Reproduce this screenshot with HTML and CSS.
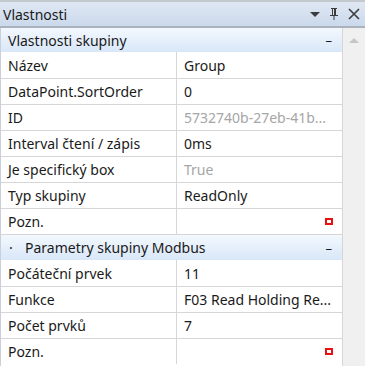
FILE: index.html
```html
<!DOCTYPE html>
<html lang="cs">
<head>
  <meta charset="UTF-8">
  <title>Vlastnosti</title>
  <link rel="stylesheet" href="styles.css">
</head>
<body>
  <div class="panel">
    <div class="titlebar">
      <span class="title">Vlastnosti</span>
      <div class="tools">
        <svg width="12" height="12" viewBox="0 0 12 12"><path d="M1 4h10l-5 5z" fill="#3c3c3c"/></svg>
        <svg width="12" height="14" viewBox="0 0 12 14"><path d="M3 1h6v1H8v6h2v1H6.5v4h-1V9H2V8h2V2H3zM5 2v6h1V2z" fill="#3c3c3c"/></svg>
        <svg width="14" height="14" viewBox="0 0 14 14"><path d="M2 2l10 10M12 2L2 12" stroke="#3c3c3c" stroke-width="1.6"/></svg>
      </div>
    </div>
    <div class="content">
      <div class="grid">
        <div class="category">
          <span>Vlastnosti skupiny</span>
          <span class="toggle">–</span>
        </div>
        <div class="row"><div class="name">Název</div><div class="value">Group</div></div>
        <div class="row"><div class="name">DataPoint.SortOrder</div><div class="value">0</div></div>
        <div class="row"><div class="name">ID</div><div class="value disabled">5732740b-27eb-41b...</div></div>
        <div class="row"><div class="name">Interval čtení / zápis</div><div class="value">0ms</div></div>
        <div class="row"><div class="name">Je specifický box</div><div class="value disabled">True</div></div>
        <div class="row"><div class="name">Typ skupiny</div><div class="value">ReadOnly</div></div>
        <div class="row"><div class="name">Pozn.</div><div class="value"><span class="note"></span></div></div>

        <div class="category">
          <span><span class="dot">·</span>Parametry skupiny Modbus</span>
          <span class="toggle">–</span>
        </div>
        <div class="row"><div class="name">Počáteční prvek</div><div class="value">11</div></div>
        <div class="row"><div class="name">Funkce</div><div class="value">F03 Read Holding Re...</div></div>
        <div class="row"><div class="name">Počet prvků</div><div class="value">7</div></div>
        <div class="row"><div class="name">Pozn.</div><div class="value"><span class="note"></span></div></div>
      </div>
      <div class="scrollbar">
        <svg width="10" height="6" viewBox="0 0 10 6"><path d="M0 6L5 1l5 5z" fill="#c6c6c6"/></svg>
      </div>
    </div>
  </div>
</body>
</html>
```

FILE: styles.css
```css
body {
  margin: 0;
  font-family: "Noto Sans", "Open Sans", sans-serif;
  font-size: 14px;
  color: #1a1a1a;
  background: #f0f0f0;
}
.panel {
  width: 365px;
  height: 366px;
  overflow: hidden;
}
.titlebar {
  height: 24px;
  border-top: 2px solid #c4c9d0;
  border-bottom: 2px solid #aab2bd;
  background: linear-gradient(#dfe7f3, #cbd9ec);
  display: flex;
  align-items: center;
  padding-left: 3px;
  padding-right: 4px;
}
.title {
  flex: 1;
}
.tools {
  display: flex;
  align-items: center;
  gap: 7px;
}
.content {
  display: flex;
}
.grid {
  width: 341px;
  border-left: 1px solid #c9d0da;
  border-right: 1px solid #d6d6d6;
  background: #fff;
}
.category {
  height: 24px;
  display: flex;
  align-items: center;
  justify-content: space-between;
  padding: 0 10px 0 7px;
  background: linear-gradient(#f3f8fe, #d8e7f8);
}
.category + .row {
  border-top: 0;
}
.row + .category {
  height: 25px;
  border-top: 1px solid #d6d6d6;
}
.dot {
  display: inline-block;
  width: 16px;
  padding-left: 1px;
}
.toggle {
  font-size: 13px;
}
.row {
  display: flex;
  height: 25px;
  border-top: 1px solid #d6d6d6;
}
.category + .row {
  height: 26px;
}
.name {
  width: 168px;
  padding-left: 7px;
  border-right: 1px solid #d6d6d6;
  display: flex;
  align-items: center;
}
.value {
  flex: 1;
  padding-left: 7px;
  padding-right: 9px;
  display: flex;
  align-items: center;
  white-space: nowrap;
  overflow: hidden;
}
.disabled {
  color: #a6a6a6;
}
.note {
  margin-left: auto;
  width: 4px;
  height: 3px;
  border: 2px solid #e81010;
  background: #fff;
}
.scrollbar {
  width: 22px;
  height: 338px;
  background: #f0f0f0;
  display: flex;
  justify-content: center;
  padding-top: 9px;
}
```
